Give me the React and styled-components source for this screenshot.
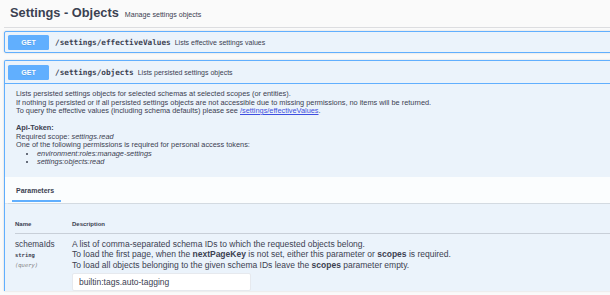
import styled, { createGlobalStyle } from 'styled-components';

const GlobalStyle = createGlobalStyle`
    html, body {
        margin: 0;
        padding: 0;
        background: #fafafa;
        overflow: hidden;
    }
    body {
        font-family: "Liberation Sans", Arial, sans-serif;
        color: #3b4151;
    }
`;

const params = [
    {
        name: 'schemaIds',
        type: 'string',
        in: '(query)',
        value: 'builtin:tags.auto-tagging',
    },
];

const App = () => {
    return (
        <Page>
            <GlobalStyle />
            <TagHeader>
                <TagTitle>Settings - Objects</TagTitle>
                <TagNote>Manage settings objects</TagNote>
            </TagHeader>

            <OpBlock>
                <Summary>
                    <Method>GET</Method>
                    <Path>/settings/effectiveValues</Path>
                    <SummaryText>Lists effective settings values</SummaryText>
                </Summary>
            </OpBlock>

            <OpBlock $open>
                <Summary $open>
                    <Method>GET</Method>
                    <Path>/settings/objects</Path>
                    <SummaryText>Lists persisted settings objects</SummaryText>
                </Summary>
                <Description>
                    <p>
                        Lists persisted settings objects for selected schemas at selected scopes (or entities).
                        <br />
                        If nothing is persisted or if all persisted settings objects are not accessible due to missing permissions, no items will be returned.
                        <br />
                        To query the effective values (including schema defaults) please see{' '}
                        <a href="#effective">/settings/effectiveValues</a>.
                    </p>
                    <p>
                        <strong>Api-Token:</strong>
                        <br />
                        Required scope: <em>settings.read</em>
                        <br />
                        One of the following permissions is required for personal access tokens:
                    </p>
                    <ul>
                        <li><em>environment:roles:manage-settings</em></li>
                        <li><em>settings:objects:read</em></li>
                    </ul>
                </Description>
                <SectionHeader>
                    <TabTitle>Parameters</TabTitle>
                </SectionHeader>
                <ParamsTable>
                    <HeadRow>
                        <HeadCell>Name</HeadCell>
                        <HeadCell>Description</HeadCell>
                    </HeadRow>
                    {params.map((p) => (
                        <ParamRow key={p.name}>
                            <ParamName>
                                <span>{p.name}</span>
                                <ParamType>{p.type}</ParamType>
                                <ParamIn>{p.in}</ParamIn>
                            </ParamName>
                            <ParamDesc>
                                <p>
                                    A list of comma-separated schema IDs to which the requested objects belong.
                                    <br />
                                    To load the first page, when the <strong>nextPageKey</strong> is not set, either this parameter or <strong>scopes</strong> is required.
                                    <br />
                                    To load all objects belonging to the given schema IDs leave the <strong>scopes</strong> parameter empty.
                                </p>
                                <ParamInput defaultValue={p.value} />
                            </ParamDesc>
                        </ParamRow>
                    ))}
                </ParamsTable>
            </OpBlock>
        </Page>
    );
};

export default App;

const Page = styled.div`
    width: 640px;
    padding-left: 4px;
`;

const TagHeader = styled.div`
    display: flex;
    align-items: baseline;
    gap: 6px;
    height: 28px;
    box-sizing: border-box;
    padding: 4px 0 0 6px;
    border-bottom: 1px solid #dcdde0;
    margin-bottom: 3px;
`;

const TagTitle = styled.h3`
    margin: 0;
    font-size: 12.8px;
    font-weight: bold;
    color: #3b4151;
    line-height: 18px;
`;

const TagNote = styled.small`
    font-size: 7.1px;
    color: #3b4151;
`;

const OpBlock = styled.div`
    background: #ebf3fb;
    border: 1px solid #61affe;
    border-radius: 2px;
    box-shadow: 0 0 2px rgba(0, 0, 0, 0.19);
    margin-bottom: 7px;
    ${(p) => p.$open && 'border-bottom: none; border-radius: 2px 2px 0 0;'}
`;

const Summary = styled.div`
    display: flex;
    align-items: center;
    height: 20px;
    padding: 0 3px;
    ${(p) => p.$open && 'height: 22px; border-bottom: 1px solid #61affe;'}
`;

const Method = styled.span`
    width: 41px;
    height: 15px;
    display: flex;
    align-items: center;
    justify-content: center;
    background: #61affe;
    border-radius: 1.5px;
    color: #fff;
    font-size: 7px;
    font-weight: bold;
    text-shadow: 0 0.5px 0 rgba(0, 0, 0, 0.1);
`;

const Path = styled.span`
    margin-left: 6px;
    font-family: "DejaVu Sans Mono", "Liberation Mono", monospace;
    font-size: 7.7px;
    font-weight: bold;
    color: #3b4151;
`;

const SummaryText = styled.span`
    margin-left: 4px;
    font-size: 7px;
    color: #3b4151;
`;

const Description = styled.div`
    padding: 6px 11px 10px;
    font-size: 7.35px;
    line-height: 8.5px;
    color: #3b4151;

    p {
        margin: 0 0 8.5px;
    }

    p:last-of-type {
        margin-bottom: 0;
    }

    a {
        color: #3e4fe0;
        text-decoration: underline;
    }

    ul {
        margin: 0;
        padding-left: 21px;
        list-style: disc;
    }

    li {
        line-height: 8.5px;
    }
`;

const SectionHeader = styled.div`
    background: rgba(255, 255, 255, 0.8);
    box-shadow: 0 0.5px 1px rgba(0, 0, 0, 0.1);
    height: 26px;
    padding-left: 7px;
    display: flex;
    align-items: flex-end;
`;

const TabTitle = styled.h4`
    margin: 0 0 1px;
    padding: 0 4px 5px;
    font-size: 7px;
    font-weight: bold;
    color: #3b4151;
    border-bottom: 2px solid #61affe;
    line-height: 8px;
    width: 49px;
    box-sizing: border-box;
`;

const ParamsTable = styled.div`
    padding: 18px 10px 0;
`;

const HeadRow = styled.div`
    display: grid;
    grid-template-columns: 57px 1fr;
    border-bottom: 1px solid rgba(59, 65, 81, 0.2);
    padding: 0 0 6px 0;
`;

const HeadCell = styled.div`
    font-size: 6px;
    font-weight: bold;
    color: #3b4151;
`;

const ParamRow = styled.div`
    display: grid;
    grid-template-columns: 57px 1fr;
    padding-top: 5px;
`;

const ParamName = styled.div`
    display: flex;
    flex-direction: column;
    font-size: 8.2px;
    color: #3b4151;
    line-height: 11px;
`;

const ParamType = styled.span`
    font-family: "DejaVu Sans Mono", "Liberation Mono", monospace;
    font-size: 5.5px;
    font-weight: bold;
    line-height: 10px;
`;

const ParamIn = styled.span`
    font-family: "DejaVu Sans Mono", "Liberation Mono", monospace;
    font-size: 5.5px;
    font-style: italic;
    color: gray;
    line-height: 10px;
`;

const ParamDesc = styled.div`
    font-size: 8.5px;
    line-height: 10.5px;
    color: #3b4151;

    p {
        margin: 0 0 3px;
    }
`;

const ParamInput = styled.input`
    width: 179px;
    height: 18px;
    box-sizing: border-box;
    border: 1px solid #e6e9ee;
    border-radius: 2px;
    background: #fff;
    padding: 0 6px;
    font-family: "Liberation Sans", Arial, sans-serif;
    font-size: 8.5px;
    color: #3b4151;
    outline: none;
`;
